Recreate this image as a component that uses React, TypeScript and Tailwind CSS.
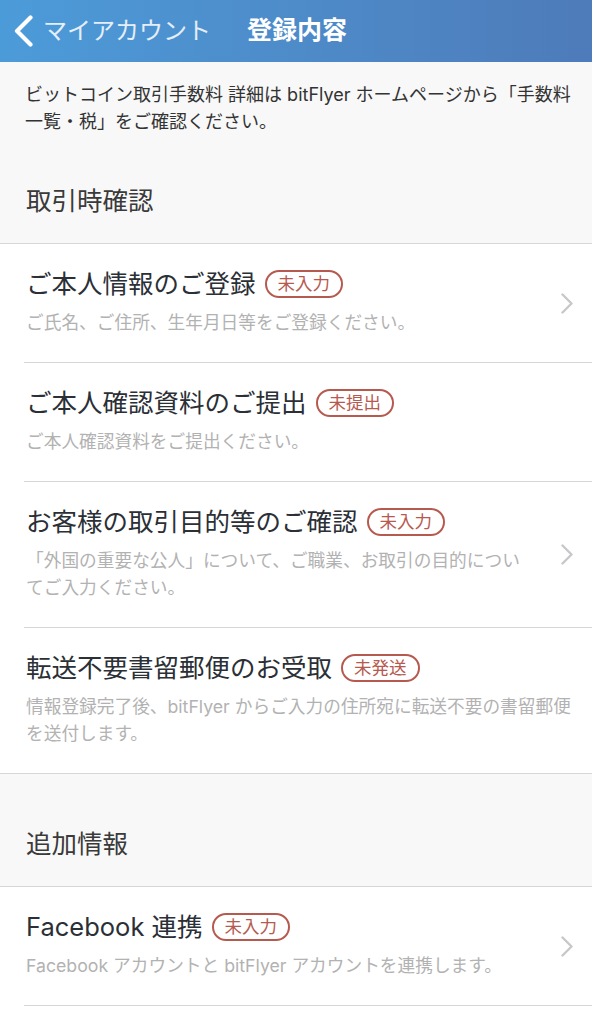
import React from "react";

type Item = {
  title: string;
  badge: string;
  sub: string[];
  chevron: boolean;
  last?: boolean;
};

const items: Item[] = [
  {
    title: "ご本人情報のご登録",
    badge: "未入力",
    sub: ["ご氏名、ご住所、生年月日等をご登録ください。"],
    chevron: true,
  },
  {
    title: "ご本人確認資料のご提出",
    badge: "未提出",
    sub: ["ご本人確認資料をご提出ください。"],
    chevron: false,
  },
  {
    title: "お客様の取引目的等のご確認",
    badge: "未入力",
    sub: ["「外国の重要な公人」について、ご職業、お取引の目的につい", "てご入力ください。"],
    chevron: true,
  },
  {
    title: "転送不要書留郵便のお受取",
    badge: "未発送",
    sub: ["情報登録完了後、bitFlyer からご入力の住所宛に転送不要の書留郵便", "を送付します。"],
    chevron: false,
    last: true,
  },
];

function Chevron() {
  return (
    <svg width="12" height="21" viewBox="0 0 12 21" fill="none" className="shrink-0">
      <path d="M1.5 1.5 L10.5 10.5 L1.5 19.5" stroke="#c7c7cc" strokeWidth="2.4" strokeLinecap="round" strokeLinejoin="round" />
    </svg>
  );
}

function Row({ item }: { item: Item }) {
  return (
    <div className="bg-white">
      <div className="flex items-center pl-[26px] pr-[19px]">
        <div className="flex-1 pt-[24px] pb-[26px]">
          <div className="flex items-center">
            <p className="text-[25.5px] leading-[32px] text-[#2b2f36]">{item.title}</p>
            <span className="ml-[9px] rounded-full border-[2.5px] border-[#b65a50] px-[11px] text-[17.5px] leading-[24px] text-[#b65a50]">
              {item.badge}
            </span>
          </div>
          <div className="mt-[9px] text-[17.7px] leading-[27px] whitespace-nowrap text-[#b2b2b2]">
            {item.sub.map((line) => (
              <p key={line}>{line}</p>
            ))}
          </div>
        </div>
        {item.chevron && <Chevron />}
      </div>
      <div className={item.last ? "h-px bg-[#d6d6d6]" : "ml-[24px] h-px bg-[#d6d6d6]"} />
    </div>
  );
}

export default function App() {
  return (
    <div
      className="w-[592px] bg-[#f8f8f8]"
      style={{ fontFamily: 'Inter, "Noto Sans CJK JP", sans-serif' }}
    >
      <div className="flex h-[62px] items-center bg-gradient-to-r from-[#4c9bd9] to-[#4e7bb9] pl-[14px] text-white">
        <svg width="20" height="32" viewBox="0 0 20 32" fill="none">
          <path d="M16.5 2.5 L3 16 L16.5 29.5" stroke="#fff" strokeWidth="4.2" strokeLinecap="round" strokeLinejoin="round" />
        </svg>
        <span className="ml-[9px] text-[24px] text-white/85">マイアカウント</span>
        <span className="ml-[36px] text-[25px] font-bold">登録内容</span>
      </div>

      <div className="px-[25px] pt-[19px] text-[18px] leading-[27px] whitespace-nowrap text-[#333]">
        <p>ビットコイン取引手数料 詳細は bitFlyer ホームページから「手数料</p>
        <p>一覧・税」をご確認ください。</p>
      </div>

      <p className="px-[26px] pt-[50px] pb-[26px] text-[25.5px] leading-[32px] text-[#3a3a3a]">取引時確認</p>
      <div className="h-px bg-[#d6d6d6]" />
      {items.map((item) => (
        <Row key={item.title} item={item} />
      ))}

      <p className="px-[26px] pt-[54px] pb-[26px] text-[25.5px] leading-[32px] text-[#3a3a3a]">追加情報</p>
      <div className="h-px bg-[#d6d6d6]" />
      <Row
        item={{
          title: "Facebook 連携",
          badge: "未入力",
          sub: ["Facebook アカウントと bitFlyer アカウントを連携します。"],
          chevron: true,
        }}
      />
      <div className="h-[40px] bg-white" />
    </div>
  );
}
